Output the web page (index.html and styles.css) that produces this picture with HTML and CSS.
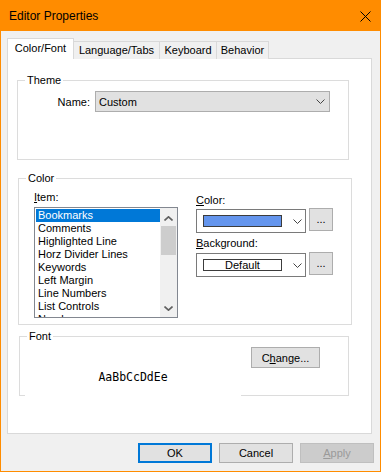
FILE: index.html
```html
<!doctype html>
<html>
  <head>
    <title>Editor Properties</title>
    <link rel="stylesheet" href="styles.css">
  </head>
  <body>
    <div class="window">
      <div class="titlebar">
        <span class="title">Editor Properties</span>
        <svg class="close" width="11" height="11" viewBox="0 0 11 11">
          <path d="M0.5 0.5 L10.5 10.5 M10.5 0.5 L0.5 10.5" stroke="#000" stroke-width="1" fill="none" />
        </svg>
      </div>

      <div class="client">
        <div class="tab-container">
          <div class="tab active">Color/Font</div>
          <div class="tab tab-lang">Language/Tabs</div>
          <div class="tab tab-keys">Keyboard</div>
          <div class="tab tab-behavior">Behavior</div>
        </div>

        <div class="tab-panel">
          <div class="group group-theme">
            <div class="group-title">Theme</div>
            <div class="name-row">
              <span class="name-label">Name:</span>
              <div class="select">
                <span>Custom</span>
                <svg class="chevron" width="9" height="5" viewBox="0 0 9 5">
                  <path d="M0.5 0.5 L4.5 4.5 L8.5 0.5" stroke="#444" stroke-width="1" fill="none" />
                </svg>
              </div>
            </div>
          </div>

          <div class="group group-color">
            <div class="group-title">Color</div>
            <div class="color-body">
              <div class="item-col">
                <div class="field-label"><u>I</u>tem:</div>
                <div class="listbox">
                  <div class="list-items">
                    <div class="list-item selected">Bookmarks</div>
                    <div class="list-item">Comments</div>
                    <div class="list-item">Highlighted Line</div>
                    <div class="list-item">Horz Divider Lines</div>
                    <div class="list-item">Keywords</div>
                    <div class="list-item">Left Margin</div>
                    <div class="list-item">Line Numbers</div>
                    <div class="list-item">List Controls</div>
                    <div class="list-item">Numbers</div>
                  </div>
                  <div class="scrollbar">
                    <div class="sb-btn sb-up">
                      <svg width="9" height="5" viewBox="0 0 9 5">
                        <path d="M0.5 4.5 L4.5 0.8 L8.5 4.5" stroke="#606060" stroke-width="1.6" fill="none" />
                      </svg>
                    </div>
                    <div class="sb-thumb"></div>
                    <div class="sb-space"></div>
                    <div class="sb-btn sb-down">
                      <svg width="9" height="5" viewBox="0 0 9 5">
                        <path d="M0.5 0.5 L4.5 4.2 L8.5 0.5" stroke="#606060" stroke-width="1.6" fill="none" />
                      </svg>
                    </div>
                  </div>
                </div>
              </div>

              <div class="pick-col">
                <div class="field-label"><u>C</u>olor:</div>
                <div class="combo-row">
                  <div class="combo">
                    <div class="swatch"></div>
                    <svg class="chevron" width="9" height="5" viewBox="0 0 9 5">
                      <path d="M0.5 0.5 L4.5 4.5 L8.5 0.5" stroke="#444" stroke-width="1" fill="none" />
                    </svg>
                  </div>
                  <button class="btn dots-btn">...</button>
                </div>
                <div class="field-label bg-label"><u>B</u>ackground:</div>
                <div class="combo-row bg-row">
                  <div class="combo">
                    <div class="swatch swatch-default">Default</div>
                    <svg class="chevron" width="9" height="5" viewBox="0 0 9 5">
                      <path d="M0.5 0.5 L4.5 4.5 L8.5 0.5" stroke="#444" stroke-width="1" fill="none" />
                    </svg>
                  </div>
                  <button class="btn dots-btn">...</button>
                </div>
              </div>
            </div>
          </div>

          <div class="group group-font">
            <div class="group-title">Font</div>
            <div class="font-body">
              <div class="font-preview">AaBbCcDdEe</div>
              <button class="btn change-btn">C<u>h</u>ange...</button>
            </div>
          </div>
        </div>

        <div class="dialog-buttons">
          <button class="btn dlg-btn default-btn">OK</button>
          <button class="btn dlg-btn">Cancel</button>
          <button class="btn dlg-btn disabled-btn"><u>A</u>pply</button>
        </div>
      </div>
    </div>
  </body>
</html>
```

FILE: styles.css
```css
body {
  margin: 0;
}
.window {
  width: 381px;
  height: 472px;
  font-family: "Liberation Sans", Arial, sans-serif;
  font-size: 11px;
  color: #000;
  background-color: #f0f0f0;
}
.titlebar {
  height: 31px;
  background-color: #ff8c00;
  display: flex;
  align-items: center;
  justify-content: space-between;
  padding: 1px 10px 0 9px;
  box-sizing: border-box;
}
.title {
  font-size: 12px;
}
.close {
  display: block;
}
.client {
  height: 441px;
  box-sizing: border-box;
  border: 1px solid #ff8c00;
  border-top: none;
  padding: 7px 6px 0 6px;
}
.tab-container {
  display: flex;
  align-items: flex-end;
  height: 21px;
  margin-bottom: -1px;
}
.tab {
  box-sizing: border-box;
  height: 18px;
  line-height: 16px;
  text-align: center;
  background-color: #f0f0f0;
  border: 1px solid #d9d9d9;
  border-left: none;
  border-bottom: none;
  white-space: nowrap;
}
.tab.active {
  position: relative;
  width: 67px;
  height: 21px;
  line-height: 19px;
  background-color: #fff;
  border-left: 1px solid #d9d9d9;
}
.tab-lang {
  width: 86px;
}
.tab-keys {
  width: 57px;
}
.tab-behavior {
  width: 52px;
}
.tab-panel {
  width: 365px;
  height: 376px;
  box-sizing: border-box;
  border: 1px solid #d9d9d9;
  background-color: #fff;
  overflow: hidden;
}
.group {
  box-sizing: border-box;
  border: 1px solid #dcdcdc;
}
.group-title {
  width: fit-content;
  height: 14px;
  line-height: 14px;
  padding: 0 2px;
  margin: -8px 0 -6px 7px;
  background-color: #fff;
}
.group-theme {
  margin: 21px 0 0 9px;
  width: 332px;
  height: 80px;
}
.name-row {
  display: flex;
  align-items: center;
  margin-top: 10px;
}
.name-label {
  width: 72px;
  text-align: right;
  margin-right: 5px;
}
.select {
  width: 235px;
  height: 21px;
  box-sizing: border-box;
  border: 1px solid #adadad;
  background-color: #e1e1e1;
  display: flex;
  align-items: center;
  justify-content: space-between;
  padding: 0 4px 0 3px;
}
.chevron {
  display: block;
}
.group-color {
  margin: 18px 0 0 10px;
  width: 334px;
  height: 147px;
}
.color-body {
  display: flex;
  margin-top: 12px;
}
.item-col {
  margin-left: 15px;
}
.field-label {
  height: 13px;
  line-height: 13px;
}
.listbox {
  margin-top: 3px;
  width: 144px;
  height: 111px;
  box-sizing: border-box;
  border: 1px solid #828790;
  display: flex;
}
.list-items {
  flex: 1;
  padding: 1px 0 0 1px;
  overflow: hidden;
}
.list-item {
  height: 13px;
  line-height: 13px;
  padding-left: 2px;
  white-space: nowrap;
}
.list-item.selected {
  background-color: #0078d7;
  color: #fff;
}
.scrollbar {
  width: 17px;
  background-color: #f0f0f0;
  display: flex;
  flex-direction: column;
}
.sb-btn {
  height: 17px;
  box-sizing: border-box;
  display: flex;
  justify-content: center;
}
.sb-btn svg {
  display: block;
}
.sb-up {
  padding-top: 8px;
}
.sb-down {
  padding-top: 6px;
}
.sb-thumb {
  margin: 1px auto 0 auto;
  width: 15px;
  height: 29px;
  background-color: #cdcdcd;
}
.sb-space {
  flex: 1;
}
.pick-col {
  margin: 3px 0 0 18px;
}
.combo-row {
  display: flex;
  align-items: flex-start;
  margin-top: 1px;
}
.bg-label {
  margin-top: 4px;
}
.bg-row {
  margin-top: 2px;
}
.combo {
  margin-top: 1px;
  width: 110px;
  height: 24px;
  box-sizing: border-box;
  border: 1px solid #7a7a7a;
  background-color: #fff;
  display: flex;
  align-items: center;
  padding-left: 6px;
}
.combo .chevron {
  margin-left: 11px;
}
.swatch {
  width: 79px;
  height: 12px;
  box-sizing: border-box;
  border: 1px solid #3c3c3c;
  background-color: #6495ed;
}
.swatch-default {
  background-color: #fff;
  text-align: center;
  line-height: 10px;
}
.btn {
  font-family: inherit;
  font-size: 11px;
  color: #000;
  margin: 0;
  padding: 0;
  box-sizing: border-box;
  border: 1px solid #adadad;
  background-color: #e1e1e1;
  text-align: center;
}
.dots-btn {
  width: 24px;
  height: 23px;
  margin-left: 3px;
  line-height: 17px;
}
.group-font {
  margin: 11px 0 0 11px;
  width: 330px;
  height: 60px;
}
.font-body {
  display: flex;
  align-items: flex-end;
  height: 58px;
}
.font-preview {
  margin: 0 0 -1px 5px;
  width: 216px;
  height: 38px;
  background-color: #fff;
  display: flex;
  align-items: center;
  justify-content: center;
  font-family: "DejaVu Sans Mono", monospace;
  font-size: 11.5px;
}
.change-btn {
  align-self: flex-start;
  margin: 10px 0 0 10px;
  width: 69px;
  height: 21px;
}
.dialog-buttons {
  display: flex;
  justify-content: flex-end;
  gap: 7px;
  margin-top: 9px;
}
.dlg-btn {
  width: 74px;
  height: 20px;
}
.default-btn {
  border: 2px solid #0078d7;
}
.disabled-btn {
  background-color: #cccccc;
  border-color: #bfbfbf;
  color: #9a9a9a;
}
```
